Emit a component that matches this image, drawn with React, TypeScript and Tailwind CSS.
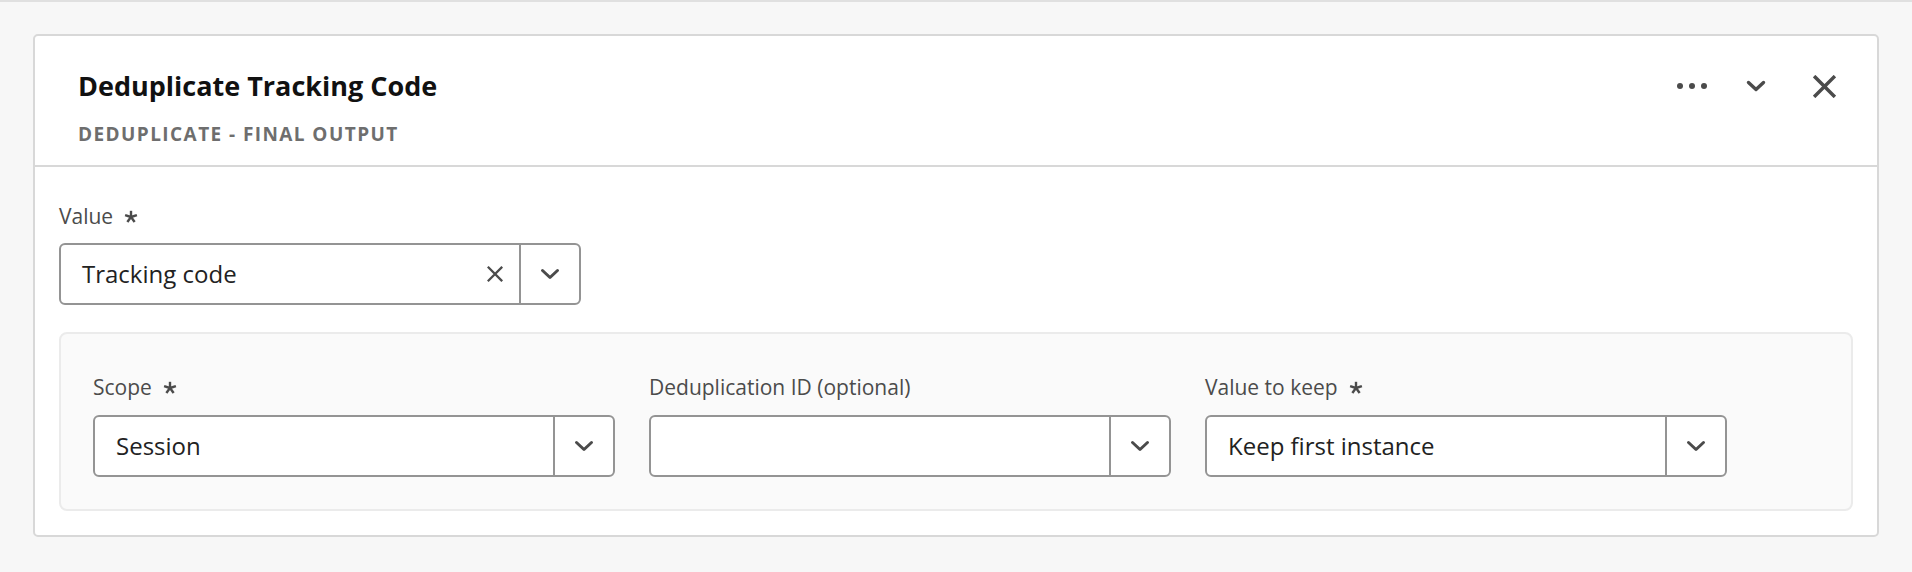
import React from "react";

const ICON = "#4b4b4b";

function Asterisk() {
  const arms = [-90, -18, 54, 126, 198];
  return (
    <svg width="14" height="13" viewBox="0 0 14 13" className="ml-[11px] shrink-0">
      {arms.map((a) => {
        const r = (a * Math.PI) / 180;
        return (
          <line
            key={a}
            x1={7}
            y1={7}
            x2={7 + Math.cos(r) * 6.2}
            y2={7 + Math.sin(r) * 6.2}
            stroke={ICON}
            strokeWidth={2.4}
          />
        );
      })}
    </svg>
  );
}

function Chevron({ w = 20, h = 12, sw = 3 }: { w?: number; h?: number; sw?: number }) {
  return (
    <svg width={w} height={h} viewBox="0 0 20 12" fill="none">
      <path d="M2.5 2.5 L10 9.5 L17.5 2.5" stroke={ICON} strokeWidth={sw} strokeLinecap="round" strokeLinejoin="round" />
    </svg>
  );
}

function Cross({ size, sw }: { size: number; sw: number }) {
  return (
    <svg width={size} height={size} viewBox="0 0 20 20" fill="none">
      <path d="M2 2 L18 18 M18 2 L2 18" stroke={ICON} strokeWidth={sw} strokeLinecap="square" />
    </svg>
  );
}

function Label({ text, required }: { text: string; required?: boolean }) {
  return (
    <div className="flex h-[26px] items-center text-[21px] leading-[26px] text-[#4b4b4b]">
      <span>{text}</span>
      {required && <Asterisk />}
    </div>
  );
}

function Picker({ value, clearable }: { value?: string; clearable?: boolean }) {
  return (
    <div className="flex h-[62px] w-[522px] overflow-hidden rounded-[6px] border-2 border-[#949494] bg-white">
      <div className="flex flex-1 items-center justify-between pl-[21px] pr-[16px]">
        <span className="text-[24px] text-[#222222]">{value}</span>
        {clearable && <Cross size={16} sw={2.8} />}
      </div>
      <div className="flex w-[60px] items-center justify-center border-l-2 border-[#949494]">
        <Chevron />
      </div>
    </div>
  );
}

function Field({ label, required, value, clearable, gap }: { label: string; required?: boolean; value?: string; clearable?: boolean; gap: string }) {
  return (
    <div className="flex flex-col">
      <Label text={label} required={required} />
      <div className={gap}>
        <Picker value={value} clearable={clearable} />
      </div>
    </div>
  );
}

export default function App() {
  return (
    <div
      className="min-h-[572px] border-t-2 border-[#e0e0e0] bg-[#f7f7f7] px-[33px] pt-[32px]"
      style={{ fontFamily: '"Open Sans", "Noto Sans", sans-serif' }}
    >
      <div className="rounded-[5px] border-2 border-[#d8d8d8] bg-white">
        <div className="flex items-start justify-between border-b-2 border-[#d8d8d8] pb-[20px] pl-[43px] pr-[41px] pt-[33px]">
          <div>
            <h1 className="text-[27px] font-bold leading-[34px] text-[#111111]">Deduplicate Tracking Code</h1>
            <p className="mt-[20px] text-[19px] font-bold uppercase leading-[22px] tracking-[0.075em] text-[#6e6e6e]">
              Deduplicate - Final Output
            </p>
          </div>
          <div className="flex h-[34px] items-center">
            <svg width="30" height="6" viewBox="0 0 30 6">
              <circle cx="3" cy="3" r="3" fill={ICON} />
              <circle cx="15" cy="3" r="3" fill={ICON} />
              <circle cx="27" cy="3" r="3" fill={ICON} />
            </svg>
            <div className="ml-[39px]">
              <Chevron w={20} h={12} sw={3.4} />
            </div>
            <div className="ml-[47px]">
              <Cross size={23} sw={3} />
            </div>
          </div>
        </div>

        <div className="px-[24px] pb-[24px] pt-[36px]">
          <Field label="Value" required value="Tracking code" clearable gap="mt-[14px]" />

          <div className="mt-[27px] rounded-[8px] border-2 border-[#ebebeb] bg-[#fafafa] pb-[32px] pl-[32px] pr-[32px] pt-[40px]">
            <div className="flex gap-[34px]">
              <Field label="Scope" required value="Session" gap="mt-[15px]" />
              <Field label="Deduplication ID (optional)" gap="mt-[15px]" />
              <Field label="Value to keep" required value="Keep first instance" gap="mt-[15px]" />
            </div>
          </div>
        </div>
      </div>
    </div>
  );
}
